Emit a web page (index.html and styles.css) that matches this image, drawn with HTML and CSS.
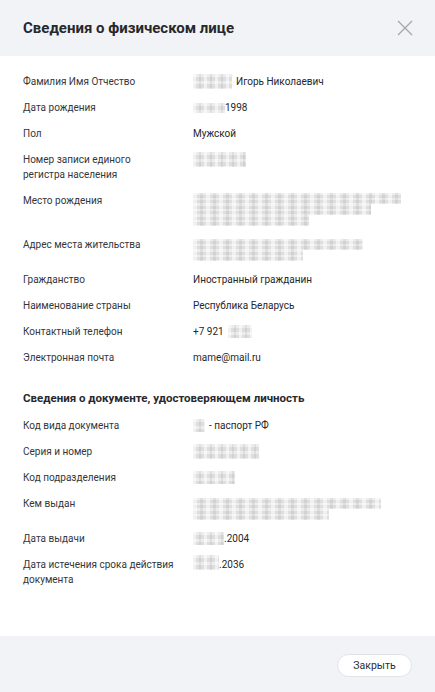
FILE: index.html
```html
<!DOCTYPE html>
<html lang="ru">
<head>
<meta charset="utf-8">
<title>Сведения о физическом лице</title>
<link rel="stylesheet" href="styles.css">
</head>
<body>
<div class="modal">
  <header class="modal-head">
    <h1 class="modal-title">Сведения о физическом лице</h1>
    <button class="close" aria-label="Закрыть">
      <svg width="16" height="16" viewBox="0 0 16 16"><path d="M1 1L15 15M15 1L1 15" stroke="#a3a6ab" stroke-width="1.3" fill="none"/></svg>
    </button>
  </header>
  <main class="modal-body">
    <dl class="info">
      <dt>Фамилия Имя Отчество</dt>
      <dd><span class="pix w39 h15"></span> Игорь Николаевич</dd>
      <dt>Дата рождения</dt>
      <dd class="tight"><span class="pix w32 h10"></span>1998</dd>
      <dt>Пол</dt>
      <dd>Мужской</dd>
      <dt>Номер записи единого<br>регистра населения</dt>
      <dd><span class="pix w53 h15"></span></dd>
      <dt>Место рождения</dt>
      <dd class="lines lines-3">
        <span class="pix line" style="width:208px"></span>
        <span class="pix line" style="width:178px"></span>
        <span class="pix line" style="width:116px"></span>
      </dd>
      <dt>Адрес места жительства</dt>
      <dd class="lines">
        <span class="pix line" style="width:170px"></span>
        <span class="pix line" style="width:110px"></span>
      </dd>
      <dt>Гражданство</dt>
      <dd>Иностранный гражданин</dd>
      <dt>Наименование страны</dt>
      <dd>Республика Беларусь</dd>
      <dt>Контактный телефон</dt>
      <dd>+7 921 <span class="pix w24 h13"></span></dd>
      <dt>Электронная почта</dt>
      <dd>mame@mail.ru</dd>
    </dl>
    <h2 class="section-title">Сведения о документе, удостоверяющем личность</h2>
    <dl class="info">
      <dt>Код вида документа</dt>
      <dd><span class="pix w12 h13"></span> - паспорт РФ</dd>
      <dt>Серия и номер</dt>
      <dd><span class="pix w66 h15"></span></dd>
      <dt>Код подразделения</dt>
      <dd><span class="pix w42 h13"></span></dd>
      <dt>Кем выдан</dt>
      <dd class="lines">
        <span class="pix line" style="width:188px"></span>
        <span class="pix line" style="width:136px"></span>
      </dd>
      <dt>Дата выдачи</dt>
      <dd class="tight"><span class="pix w31 h13"></span>.2004</dd>
      <dt>Дата истечения срока действия документа</dt>
      <dd class="tight"><span class="pix w26 h15 off"></span>.2036</dd>
    </dl>
  </main>
  <footer class="modal-foot">
    <button class="btn">Закрыть</button>
  </footer>
</div>
</body>
</html>
```

FILE: styles.css
```css
html, body {
  margin: 0;
  padding: 0;
  background: #ffffff;
}

body {
  font-family: Roboto, "Noto Sans", sans-serif;
  color: #2b2d33;
}

.modal {
  height: 692px;
  display: flex;
  flex-direction: column;
  background: #ffffff;
}

.modal-head {
  height: 56px;
  flex: none;
  display: flex;
  align-items: center;
  justify-content: space-between;
  padding: 0 22px 0 23px;
  background: #f2f3f6;
}

.modal-title {
  margin: 0;
  font-size: 15px;
  font-weight: 700;
  color: #26282d;
}

.close {
  border: 0;
  background: none;
  padding: 0;
  width: 16px;
  height: 16px;
  display: flex;
}

.modal-body {
  flex: 1;
  padding: 18px 23px 0 23px;
}

.info {
  margin: 0;
  display: grid;
  grid-template-columns: 156px 1fr;
  column-gap: 14px;
  row-gap: 11px;
  font-size: 10px;
  line-height: 15px;
}

.info dt {
  margin: 0;
  color: #34363b;
}

.info dd {
  margin: 0;
  color: #25272c;
  display: flex;
  align-items: center;
  align-self: start;
  min-height: 15px;
  gap: 4px;
}

.info dd.tight {
  gap: 0;
}

.info dd.lines {
  flex-direction: column;
  align-items: flex-start;
  gap: 0;
  padding-top: 2px;
}

.info dd.lines-3 {
  padding-top: 0;
}

.section-title {
  margin: 25px 0 12px;
  font-size: 11.5px;
  line-height: 16px;
  font-weight: 700;
  color: #26282d;
}

.pix {
  display: inline-block;
  flex: none;
  background-color: #dedede;
  background-image:
    linear-gradient(90deg, rgba(255,255,255,0.55) 0 30%, transparent 30% 55%, rgba(0,0,0,0.06) 55% 75%, transparent 75%),
    linear-gradient(rgba(255,255,255,0.45) 0 45%, transparent 45%);
  background-size: 11px 100%, 100% 7px;
}

.pix.line {
  height: 11px;
  background-size: 13px 100%, 100% 5px;
}

.pix.off { margin-top: -4px; }

.w12 { width: 12px; }
.w24 { width: 24px; }
.w26 { width: 26px; }
.w31 { width: 31px; }
.w32 { width: 32px; }
.w39 { width: 39px; }
.w42 { width: 42px; }
.w53 { width: 53px; }
.w66 { width: 66px; }
.h10 { height: 10px; }
.h13 { height: 13px; }
.h15 { height: 15px; }

.modal-foot {
  height: 56px;
  flex: none;
  display: flex;
  align-items: center;
  justify-content: flex-end;
  padding: 0 23px;
  background: #f2f3f6;
}

.btn {
  height: 23px;
  width: 75px;
  border-radius: 12px;
  border: 1px solid #e1e3e8;
  background: #ffffff;
  font-family: Roboto, "Noto Sans", sans-serif;
  font-size: 10.5px;
  color: #2b2d33;
  padding: 0;
  margin-top: 2px;
}
```
